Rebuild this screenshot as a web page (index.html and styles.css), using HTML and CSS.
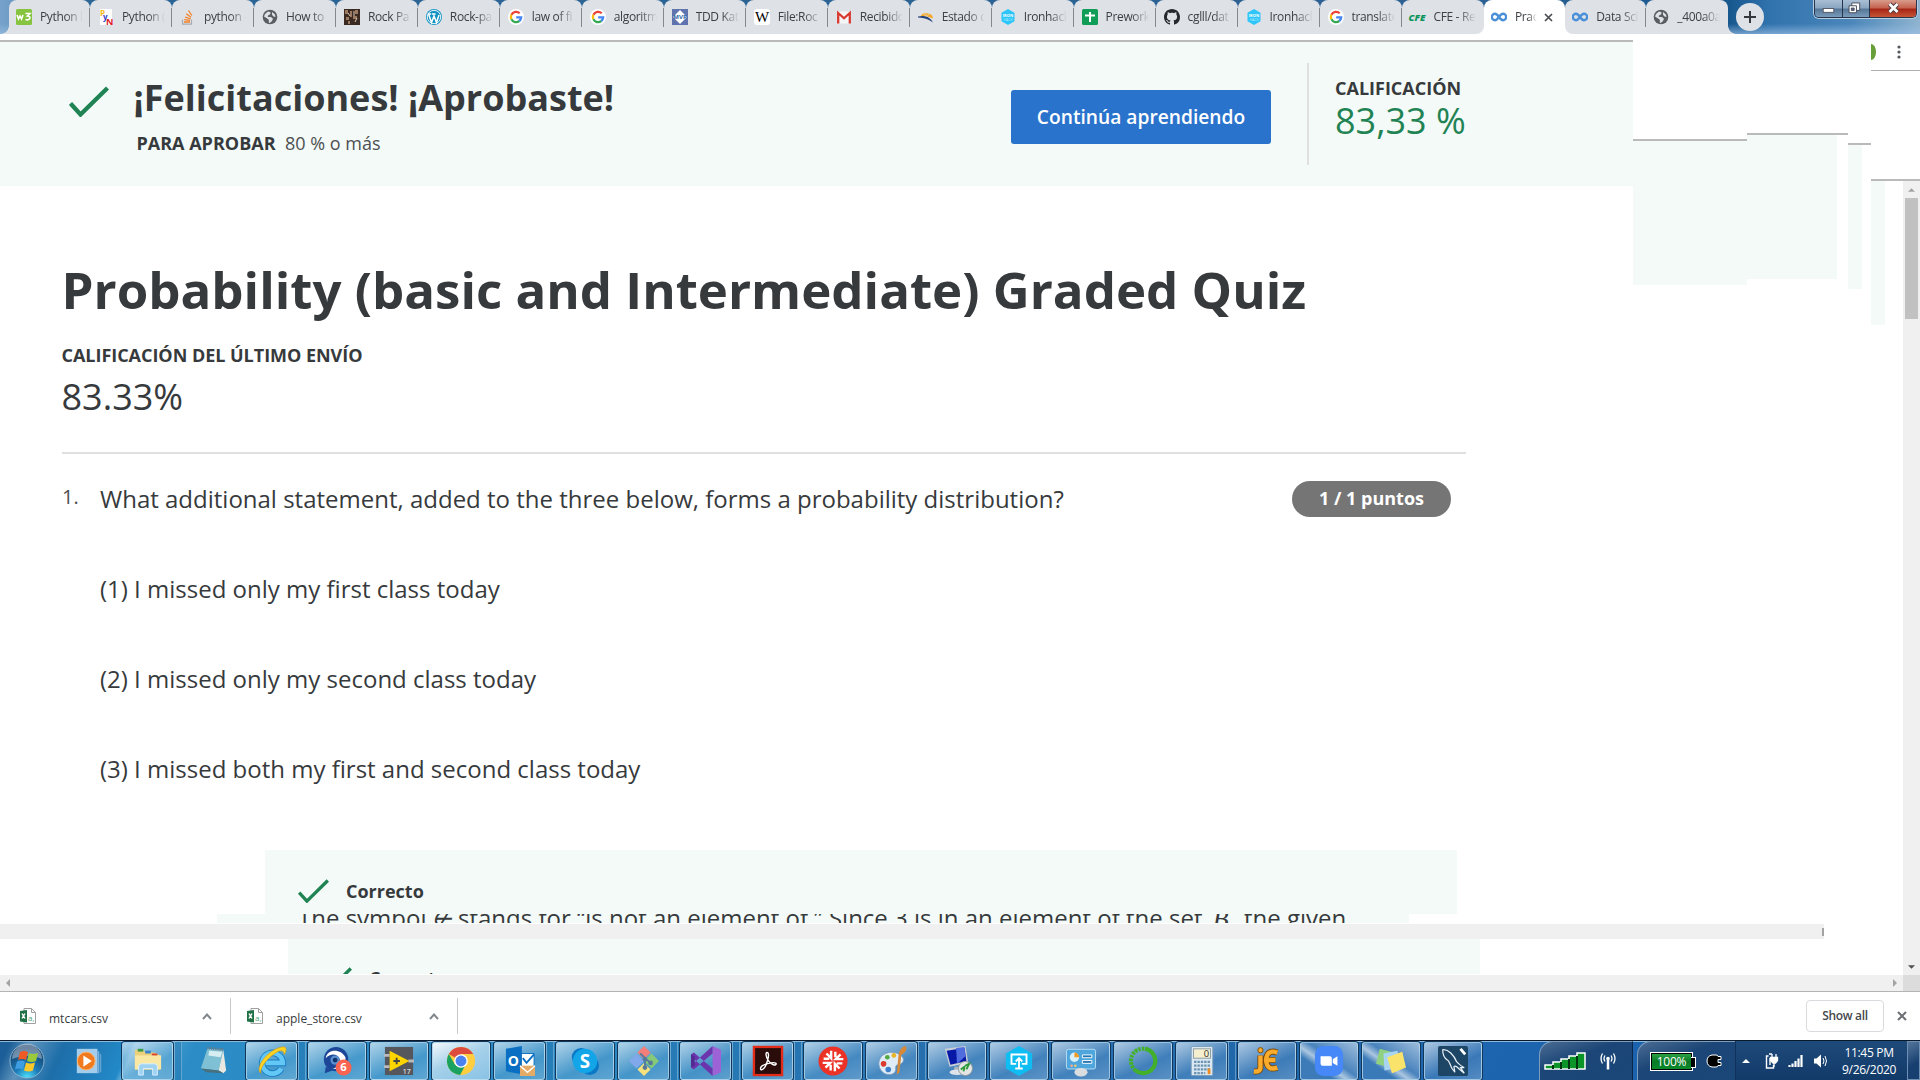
FILE: index.html
```html
<!DOCTYPE html>
<html lang="es">
<head>
<meta charset="utf-8">
<title>Practice</title>
<link rel="stylesheet" href="styles.css">
</head>
<body>
<svg class="defs" aria-hidden="true">
  <symbol id="globe" viewBox="0 0 16 16"><circle cx="8" cy="8" r="7.300" fill="#5a5d61"/><path d="M3 5l3-2.600 2.600.8-.4 2L6 6.400l-.2 1.500H9l2 1.800-1 2.200-2.200 2-1-.5V10.800L4.400 9 2 7.600z M10 3l3 2.500.5 2.500-2-.6-1.500-1.600z" fill="#dee1e6"/></symbol>
  <symbol id="google" viewBox="0 0 16 16"><circle cx="8" cy="8" r="8" fill="#fff"/><g fill="none" stroke-width="2.300"><path d="M11.700 4.300A5.200 5.200 0 0 0 3.400 5.700" stroke="#ea4335"/><path d="M3.400 5.700a5.200 5.200 0 0 0 0 4.600" stroke="#fbbc05"/><path d="M3.400 10.300a5.200 5.200 0 0 0 7.900 1.700" stroke="#34a853"/><path d="M11.300 12a5.200 5.200 0 0 0 1.900-3.700H8.200" stroke="#4285f4"/></g></symbol>
  <symbol id="iron" viewBox="0 0 16 16"><path d="M8 0l6.500 3.800v8.400L8 16l-6.500-3.800V3.800z" fill="#2dc5fa"/><text x="8" y="7.600" font-size="4" font-weight="700" text-anchor="middle" fill="#fff">IRON</text><text x="8" y="12" font-size="3.500" text-anchor="middle" fill="#b9ecfd">HACK</text></symbol>
  <symbol id="coursera" viewBox="0 0 16 16"><path d="M8 8C6.500 5.800 5.500 4.800 4 4.800a3.200 3.200 0 0 0 0 6.400C7 11.200 8.500 4.800 12 4.800a3.200 3.200 0 0 1 0 6.400C10.500 11.200 9.500 10.200 8 8" fill="none" stroke="#4a90d9" stroke-width="2.400"/></symbol>
  <symbol id="check" viewBox="0 0 40 31"><path d="M1.500 17.500L11.500 28.500 38.500 2" fill="none" stroke="#1f8354" stroke-width="4.300"/></symbol>
  <symbol id="excel" viewBox="0 0 16 16"><path d="M4 .5h7.500l4 4v11H4z" fill="#fff" stroke="#a0a0a0"/><path d="M11.500.5v4h4" fill="none" stroke="#a0a0a0"/><path d="M0 3l7-1v12.500l-7-1z" fill="#1f7145"/><path d="M2 5.500l3 5M5 5.500l-3 5" stroke="#fff" stroke-width="1.400"/><text x="8" y="13" font-size="8" fill="#4da77a">a,</text></symbol>
  <symbol id="chev" viewBox="0 0 10 7"><path d="M1 6l4-4.500L9 6" fill="none" stroke="#80868b" stroke-width="2"/></symbol>
</svg>

<div class="screen">
  <header class="tabstrip">
    <div class="tab first"><svg class="fav" viewBox="0 0 16 16"><rect width="16" height="16" rx="1.500" fill="#86c440"/><path d="M1 6l1.500 4L4 7l1.500 3L7 6M9.500 4.500h4.500L11.500 7c4 0 3 5-2 3.500" fill="none" stroke="#fff" stroke-width="1.600"/></svg><span class="cap">Python l</span></div>
    <div class="tab"><svg class="fav" viewBox="0 0 16 16"><rect x="2" width="12" height="16" fill="#fff"/><text x="2" y="7" font-size="8" font-weight="700" fill="#f3b816">P</text><text x="5" y="11" font-size="8" font-weight="700" fill="#3040c8">y</text><text x="8" y="16" font-size="9" font-weight="700" fill="#e01828">N</text></svg><span class="cap">Python (</span></div>
    <div class="tab"><svg class="fav" viewBox="0 0 16 16"><path d="M2.500 10.500v4.700h9v-4.700" fill="none" stroke="#a8abb0" stroke-width="1.200"/><path d="M4 13h6M4.200 10.700l5.800.7M5 8l5.500 1.800M6.300 4.800l4.700 3.500M8.500 1.500l3.300 5" stroke="#f48024" stroke-width="1.300"/></svg><span class="cap">python -</span></div>
    <div class="tab"><svg class="fav"><use href="#globe"/></svg><span class="cap">How to&nbsp;</span></div>
    <div class="tab"><svg class="fav" viewBox="0 0 16 16"><rect width="16" height="16" fill="#3b2a22"/><path d="M1 1h3v4H1zM6 2h2v6H6zM11 1h3v4h-3zM2 8h3v3H2zM9 7h4v3H9zM4 12h2v3H4z" fill="#9c7a62"/><path d="M4 4l2 3M10 2v5M13 9l-2 4" stroke="#d9cbb8"/></svg><span class="cap">Rock Pa</span></div>
    <div class="tab"><svg class="fav" viewBox="0 0 16 16"><circle cx="8" cy="8" r="8" fill="#1492c4"/><circle cx="8" cy="8" r="6.700" fill="none" stroke="#fff" stroke-width=".9"/><path d="M2.500 5l3 8.500L8 7l2.500 6.500L13 6M1.800 5h3.400M6 5h3.600" fill="none" stroke="#fff" stroke-width="1.500"/></svg><span class="cap">Rock-pa</span></div>
    <div class="tab"><svg class="fav"><use href="#google"/></svg><span class="cap">law of fi</span></div>
    <div class="tab"><svg class="fav"><use href="#google"/></svg><span class="cap">algoritm</span></div>
    <div class="tab"><svg class="fav" viewBox="0 0 16 16"><rect width="16" height="16" fill="#5f74ae"/><path d="M8 1l7 7-7 7-7-7z" fill="#fff"/><text x="8" y="10.300" font-size="6" font-weight="700" text-anchor="middle" fill="#2a62a8">MVP</text></svg><span class="cap">TDD Kat</span></div>
    <div class="tab"><svg class="fav" viewBox="0 0 16 16"><rect width="16" height="16" rx="3" fill="#fff"/><text class="serif" x="8" y="13" font-size="15" text-anchor="middle" fill="#000">W</text></svg><span class="cap">File:Roc</span></div>
    <div class="tab"><svg class="fav" viewBox="0 0 16 16"><rect x="1" y="2.500" width="14" height="12" rx="1" fill="#f5f5f5"/><path d="M2.200 14.500V4L8 9.300 13.800 4v10.500" fill="none" stroke="#d93a2f" stroke-width="2.300"/></svg><span class="cap">Recibido</span></div>
    <div class="tab"><svg class="fav" viewBox="0 0 16 16"><path d="M2.500 7.500a6.500 5.500 0 0 1 12.500 2L9 7.300z" fill="#f7a823"/><path d="M8 2v5M4.500 4l4 3.500M12 3L9 7.500" stroke="#dee1e6" stroke-width=".6"/><path d="M0 7.500c6-1.500 12 0 15 6-4-3-8-4.500-15-5z" fill="#26437c"/></svg><span class="cap">Estado d</span></div>
    <div class="tab"><svg class="fav"><use href="#iron"/></svg><span class="cap">Ironhack</span></div>
    <div class="tab"><svg class="fav" viewBox="0 0 16 16"><rect width="16" height="16" rx="1.500" fill="#0f9d58"/><path d="M8 3v10M3 6.500h10" stroke="#fff" stroke-width="2"/></svg><span class="cap">Prework</span></div>
    <div class="tab"><svg class="fav" viewBox="0 0 16 16"><path d="M8 0C3.580 0 0 3.580 0 8c0 3.540 2.290 6.530 5.470 7.590.4.070.55-.17.55-.38 0-.19-.01-.82-.01-1.490-2.010.37-2.530-.49-2.690-.94-.09-.23-.48-.94-.82-1.130-.28-.15-.68-.52-.01-.53.63-.01 1.080.58 1.230.82.72 1.210 1.870.87 2.330.66.07-.52.28-.87.51-1.070-1.780-.2-3.640-.89-3.640-3.950 0-.87.31-1.590.82-2.150-.08-.2-.36-1.020.08-2.120 0 0 .67-.21 2.200.82.64-.18 1.320-.27 2-.27s1.360.09 2 .27c1.530-1.040 2.200-.82 2.200-.82.44 1.100.16 1.920.08 2.120.51.56.82 1.270.82 2.150 0 3.070-1.870 3.750-3.650 3.950.29.25.54.73.54 1.480 0 1.070-.01 1.930-.01 2.200 0 .21.15.46.55.38A8.010 8.010 0 0 0 16 8c0-4.420-3.580-8-8-8z" fill="#24292e"/></svg><span class="cap">cglll/dat</span></div>
    <div class="tab"><svg class="fav"><use href="#iron"/></svg><span class="cap">Ironhack</span></div>
    <div class="tab"><svg class="fav"><use href="#google"/></svg><span class="cap">translate</span></div>
    <div class="tab before"><svg class="fav" viewBox="0 0 16 16"><text x="-.5" y="11.500" font-size="9.500" font-weight="800" font-style="italic" textLength="17" lengthAdjust="spacingAndGlyphs" fill="#08935a">CFE</text></svg><span class="cap">CFE - Re</span></div>
    <div class="tab active"><svg class="fav"><use href="#coursera"/></svg><span class="cap short">Prac</span><svg class="close" viewBox="0 0 9 9"><path d="M1 1l7 7M8 1L1 8" stroke="#4a4d51" stroke-width="1.700"/></svg></div>
    <div class="tab after"><svg class="fav"><use href="#coursera"/></svg><span class="cap">Data Sci</span></div>
    <div class="tab last"><svg class="fav"><use href="#globe"/></svg><span class="cap">_400a0a</span></div>
    <div class="newtab"><svg viewBox="0 0 12 12"><path d="M6 0v12M0 6h12" stroke="#35383c" stroke-width="2"/></svg></div>
    <div class="winctl">
      <span class="wc min"><svg viewBox="0 0 28 18"><rect x="8.500" y="8.500" width="11" height="4" fill="#fff" stroke="#555a68"/></svg></span>
      <span class="wc max"><svg viewBox="0 0 28 18"><path d="M9.500 2.500h8.500v8h-8.500z" fill="#fff" stroke="#444a58"/><path d="M6.500 5.500h8v7.500h-8z" fill="#fff" stroke="#444a58"/><path d="M9 8h3v2.500H9z" fill="#668" stroke="#444a58"/></svg></span>
      <span class="wc cls"><svg viewBox="0 0 46 18"><path d="M19.500 4l8 8M27.500 4l-8 8" stroke="#534048" stroke-width="4.600"/><path d="M19.500 4l8 8M27.500 4l-8 8" stroke="#fff" stroke-width="2.600"/></svg></span>
    </div>
  </header>

  <div class="view">
    <div class="page">
      <div class="upper">
        <main class="main">
          <section class="banner">
            <svg class="tick"><use href="#check"/></svg>
            <div class="congrats">
              <h2>¡Felicitaciones! ¡Aprobaste!</h2>
              <p><b>PARA APROBAR</b><span class="pct">80 % o más</span></p>
            </div>
            <button class="cta">Continúa aprendiendo</button>
            <div class="grade"><b>CALIFICACIÓN</b><span class="big">83,33 %</span></div>
          </section>
          <section class="quiz">
            <h1>Probability (basic and Intermediate) Graded Quiz</h1>
            <p class="lastlabel">CALIFICACIÓN DEL ÚLTIMO ENVÍO</p>
            <p class="lastgrade">83.33%</p>
            <div class="question">
              <span class="num">1.</span>
              <div class="body">
                <p>What additional statement, added to the three below, forms a probability distribution?</p>
                <p>(1) I missed only my first class today</p>
                <p>(2) I missed only my second class today</p>
                <p>(3) I missed both my first and second class today</p>
              </div>
              <span class="pill">1 / 1 puntos</span>
            </div>
          </section>
        </main>
        <div class="strip a"><i></i></div>
        <div class="strip b"><i></i></div>
        <div class="strip c"><i></i></div>
      </div>
      <div class="fb one"><svg class="smalltick"><use href="#check"/></svg><b>Correcto</b></div>
      <div class="fb two"><span>The symbol <em class="notin">∉</em> stands for “is not an element of.” Since 3 is in an element of the set <em class="setb">B</em>, the given</span></div>
      <div class="ghostbar"><i></i></div>
      <div class="fb three"><svg class="smalltick"><use href="#check"/></svg><b>Correcto</b></div>
    </div>
    <aside class="edge">
      <div class="menu"><span class="avatar"></span><svg viewBox="0 0 4 14"><g fill="#55585c"><circle cx="2" cy="2" r="1.600"/><circle cx="2" cy="7" r="1.600"/><circle cx="2" cy="12" r="1.600"/></g></svg></div>
      <div class="edgegap"></div>
      <div class="edgebody"><span class="sliver"></span><div class="vbar"><svg viewBox="0 0 8 4"><path d="M0 4l4-4 4 4z" fill="#a3a3a3"/></svg><span class="thumb"></span><svg class="down" viewBox="0 0 8 4"><path d="M0 0l4 4 4-4z" fill="#505050"/></svg></div></div>
    </aside>
  </div>
  <div class="hbar"><svg viewBox="0 0 4 8"><path d="M4 0L0 4l4 4z" fill="#a3a3a3"/></svg><svg class="rt" viewBox="0 0 4 8"><path d="M0 0l4 4-4 4z" fill="#a3a3a3"/></svg><span class="corner"></span></div>

  <div class="downloads">
    <div class="dl d1"><svg class="xls"><use href="#excel"/></svg><span>mtcars.csv</span><svg class="chev"><use href="#chev"/></svg></div>
    <div class="dl d2"><svg class="xls"><use href="#excel"/></svg><span>apple_store.csv</span><svg class="chev"><use href="#chev"/></svg></div>
    <button class="showall">Show all</button>
    <svg class="dlx" viewBox="0 0 10 10"><path d="M1 1l8 8M9 1L1 9" stroke="#6b6f74" stroke-width="2"/></svg>
  </div>

  <footer class="taskbar">
    <div class="orb"><svg viewBox="0 0 36 36"><defs><radialGradient id="og" cx=".5" cy="1" r=".9"><stop offset="0" stop-color="#4fe6ff"/><stop offset=".4" stop-color="#1d7cb8"/><stop offset="1" stop-color="#123a66"/></radialGradient></defs><circle cx="18" cy="18" r="17" fill="url(#og)" stroke="#87b4d2"/><path d="M3 16a15 15 0 0 1 30 0c-9-4-20-4-30 0z" fill="#fff" opacity=".38"/><path d="M11 9q4-2 8 0l-2 8q-4-2-8 0z" fill="#ee5a24"/><path d="M20 10q4 2 9 0l-2 8q-4 2-9 0z" fill="#9bc93a"/><path d="M8 18.500q4-2 8 0l-2 8q-4-2-8 0z" fill="#3f9ee2"/><path d="M17 19.500q4 2 9 0l-2 8q-4 2-9 0z" fill="#fcc82c"/></svg></div>
    <div class="task bare wmp"><svg viewBox="0 0 32 32"><path d="M3 3h22v26H3z" fill="#a4cdec"/><path d="M25 5l2 1v23h-2zM28 8l1 1v19h-1z" fill="#7db1da"/><circle cx="13" cy="16" r="9.500" fill="#f17a1e" stroke="#ffb36b"/><path d="M10 10l9 6-9 6z" fill="#fff"/></svg></div>
    <div class="task stack"><svg viewBox="0 0 32 32"><path d="M2 4h9l2 3h10l6 3v15H2z" fill="#ecd07a"/><path d="M2 10h28v15H2z" fill="#f9e7a4"/><path d="M5 3h6v3H5z" fill="#3d9b48"/><path d="M13 5h6v3h-6z" fill="#3683c9"/><path d="M20 8h6v2h-6z" fill="#d6452d"/><path d="M6 31v-9q0-3 3-3h14q3 0 3 3v9h-5v-7H11v7z" fill="#9fd2f1" stroke="#daf1ff"/></svg></div>
    <div class="task bare"><svg viewBox="0 0 32 32"><path d="M10 3l17 1-5 22L3 24z" fill="#7fc0d4"/><path d="M12 5l14 1-2 6-13-2z" fill="#d6edf2"/><path d="M27 4l3 22-3 3-5-3z" fill="#e8e8e0"/><path d="M10 2l17 2" stroke="#6e7b83" stroke-width="3" stroke-dasharray="1 1"/><path d="M3 24l19 2 5 3-18-1z" fill="#48707d"/></svg></div>
    <div class="task stack"><svg viewBox="0 0 32 32"><path d="M26 24A11 11 0 1 1 27.500 18H9" fill="none" stroke="#1c7fc4" stroke-width="7"/><path d="M26 24A11 11 0 1 1 27.500 18H9" fill="none" stroke="#63c8f6" stroke-width="5"/><path d="M4 29C-3 22 13 3 27 1c6-1 4 6 2 8 0-4-3-5-7-3C12 12 3 22 4 29z" fill="#fbd324" stroke="#d49c0a" stroke-width=".7"/></svg></div>
    <div class="task"><svg viewBox="0 0 32 32"><circle cx="15" cy="14" r="13" fill="#1c4697"/><path d="M4 13C5 3 20 2 25 12c1 9-7 14-14 12 6-1 9-5 8-10-2-6-10-7-15-1z" fill="#fff"/><circle cx="14" cy="15" r="5" fill="#5b8fd0"/><circle cx="14" cy="15" r="2.600" fill="#12346c"/><path d="M4 22l-1 7 8-3z" fill="#1c4697"/><circle cx="23" cy="23" r="8.500" fill="#fb6451"/><text x="23" y="27" font-size="12" font-weight="700" text-anchor="middle" fill="#fff">6</text></svg></div>
    <div class="task"><svg viewBox="0 0 32 32"><rect x="1" y="1" width="30" height="30" fill="#56575c"/><path d="M0 10h6M0 22h6M26 16h6" stroke="#b8babe" stroke-width="3"/><path d="M6 5l21 11L6 27z" fill="#ffd500"/><path d="M10 16h7M13.500 12.500v7" stroke="#444" stroke-width="2"/><text x="20" y="29.500" font-size="7.500" fill="#fff">17</text></svg></div>
    <div class="task lit"><svg viewBox="0 0 32 32"><circle cx="16" cy="16" r="15" fill="#ffcd40"/><path d="M16 16L3 8.500A15 15 0 0 1 29 8.500H16z" fill="#dd4b3e"/><path d="M3 8.500A15 15 0 0 0 15 31l6.500-12L16 16 9.500 19.800z" fill="#1aa260"/><circle cx="16" cy="16" r="7.300" fill="#fff"/><circle cx="16" cy="16" r="5.800" fill="#4a82ef"/></svg></div>
    <div class="task stack"><svg viewBox="0 0 32 32"><path d="M17 8h14v14H17z" fill="#fff" stroke="#0a6fc2"/><path d="M19 13l4 5 8-9" fill="none" stroke="#0a6fc2" stroke-width="2"/><path d="M1 3l17-3v30L1 27z" fill="#0a6fc2"/><text x="9" y="21" font-size="15" font-weight="700" text-anchor="middle" fill="#fff">O</text><path d="M16 21h16v11H16z" fill="#e3ab65"/><path d="M16 21l8 7 8-7" fill="none" stroke="#fff" stroke-width="1.500"/></svg></div>
    <div class="task"><svg viewBox="0 0 32 32"><circle cx="12" cy="12" r="10" fill="#0b78c6"/><circle cx="21" cy="21" r="10" fill="#0b78c6"/><circle cx="16" cy="16" r="13" fill="#12a5e8"/><text x="16" y="23" font-size="20" font-weight="700" text-anchor="middle" fill="#fff">S</text></svg></div>
    <div class="task stack"><svg viewBox="0 0 32 32"><path d="M16 0l7 7-7 7-7-7z" fill="#f47f7a"/><path d="M8 8l8 8-8 8-8-8z" fill="#82a8ec"/><path d="M24 8l8 8-8 8-8-8z" fill="#85c979"/><path d="M16 18l7 7-7 7-7-7z" fill="#f7e17c"/><path d="M12 8l5 5v11M17 13l6 5" fill="none" stroke="#577a9a" stroke-width="2"/><circle cx="17" cy="14" r="2.500" fill="#577a9a"/><circle cx="17" cy="23" r="2.500" fill="#577a9a"/><circle cx="23" cy="18" r="2.500" fill="#577a9a"/></svg></div>
    <div class="task stack"><svg viewBox="0 0 32 32"><path d="M23 0l9 4v24l-9 4z" fill="#9d63d6"/><path d="M0 9l3-2 20 17v8L0 11z M0 23l3 2L23 8V0L0 21z" fill="#6d35ad"/><path d="M0 9l4 2v10l-4 2z" fill="#522a92"/></svg></div>
    <div class="task stack"><svg viewBox="0 0 32 32"><rect x="1" y="1" width="30" height="30" fill="#2a0c0b" stroke="#e22c19" stroke-width="2.500"/><path d="M15 7c-2 0-1 5 1 8s6 6 8 5 0-3-5-2-11 3-11 6 4 1 6-4 4-13 1-13z" fill="none" stroke="#fff" stroke-width="1.500"/></svg></div>
    <div class="task"><svg viewBox="0 0 32 32"><circle cx="16" cy="16" r="15.500" fill="#ec3127"/><g fill="none" stroke="#fff" stroke-width="2.600"><path d="M14 5v8L9 8M6 13.500h6"/><path d="M27 14h-8l5-5M18.500 6v6"/><path d="M18 27v-8l5 5M26 18.500h-6"/><path d="M5 18h8l-5 5M13.500 26v-6"/></g></svg></div>
    <div class="task stack"><svg viewBox="0 0 32 32"><path d="M2 20C1 9 14 3 24 9c8 5 3 11-2 11-4 1 0 6-4 9-6 4-15 0-16-9z" fill="#dfebf5" stroke="#799cbe"/><circle cx="7" cy="19" r="3" fill="#d93b2d"/><circle cx="11" cy="12" r="2.500" fill="#54a744"/><circle cx="18" cy="10" r="2.500" fill="#e8b529"/><circle cx="12" cy="25" r="3" fill="#3c80cb"/><path d="M28 6l3-6-5 5z" fill="#c89f64"/><path d="M30 0c4 2-1 9-4 9l-2 19-3 3 2-22c0-3 4-9 7-9z" fill="#d6893a"/></svg></div>
    <div class="task"><svg viewBox="0 0 32 32"><path d="M3 3l22-3 3 18-20 4z" fill="#c8ced6"/><path d="M5 5l19-3 2 14-17 4z" fill="#0718a6"/><path d="M15 2l9-1 1 10-9 8z" fill="#506de0"/><path d="M13 22h8v5h-8z" fill="#aab4be"/><ellipse cx="16" cy="28" rx="8" ry="3" fill="#dde3e8"/><circle cx="25" cy="24" r="7.500" fill="#e3e6e4" stroke="#8b9498"/><path d="M20 25l4-3-1 5M25 21l4-2-3 6" fill="none" stroke="#2d9b3c" stroke-width="2"/></svg></div>
    <div class="task"><svg viewBox="0 0 32 32"><path d="M16 0l14 8v16l-14 8-14-8V8z" fill="#10bdf2"/><path d="M13 19H8V9h16v10h-5M16 24V13M12.500 16.500L16 13l3.500 3.500M12 24h8" fill="none" stroke="#fff" stroke-width="2"/></svg></div>
    <div class="task"><svg viewBox="0 0 32 32"><rect x=".5" y="3.500" width="31" height="21" rx="2" fill="#4fa6dc" stroke="#b9dff4"/><circle cx="9" cy="12" r="5" fill="#daf0fb"/><path d="M9 12V7a5 5 0 0 1 5 5z" fill="#f49a1e"/><path d="M17.500 9.500h10v3h-10zM17.500 15.500h10v3h-10z" fill="#2376b2" stroke="#fff"/><circle cx="6" cy="21" r="1.300" fill="#fa8"/><circle cx="10" cy="21" r="1.300" fill="#fc6"/><ellipse cx="16" cy="28" rx="7" ry="4.500" fill="#d9dde0"/></svg></div>
    <div class="task"><svg viewBox="0 0 32 32"><path d="M18 3A13 13 0 1 1 8 26" fill="none" stroke="#43b02a" stroke-width="4.500"/><path d="M8 26A13 13 0 0 1 18 3" fill="none" stroke="#43b02a" stroke-width="4.500" stroke-dasharray="2.500 1.300"/><path d="M6 23A14 14 0 0 1 13 2" fill="none" stroke="#43b02a" stroke-width="1.500" stroke-dasharray="1 2"/></svg></div>
    <div class="task stack"><svg viewBox="0 0 32 32"><rect x="4.500" y=".5" width="23" height="31" rx="1.500" fill="#d9e8f3" stroke="#7d9db7"/><rect x="7" y="3" width="18" height="10" fill="#f4efcf" stroke="#8a98a3"/><text x="23.500" y="12" font-size="10" text-anchor="end" fill="#333">0</text><path d="M7.500 17h17M7.500 21h17M7.500 25h17M7.500 29h12" stroke="#6e93b0" stroke-width="2.400" stroke-dasharray="2.600 1"/><path d="M22 24h3v6h-3z" fill="#f08c1e"/></svg></div>
    <div class="task"><svg viewBox="0 0 32 32"><path d="M9 10v13q0 5-7 4M27 7q-11-4-12 8 1 12 12 8M14 15h11" fill="none" stroke="#7a4708" stroke-width="6.500"/><path d="M9 10v13q0 5-7 4M27 7q-11-4-12 8 1 12 12 8M14 15h11" fill="none" stroke="#f9ab2b" stroke-width="4.700"/><circle cx="9" cy="4.500" r="2.800" fill="#f9ab2b" stroke="#7a4708"/></svg></div>
    <div class="task lit2"><svg viewBox="0 0 32 32"><rect x="1" y="0" width="30" height="32" rx="9" fill="#4688f8"/><path d="M7 11h10q2 0 2 2v8H9q-2 0-2-2zM20 14l5-3v10l-5-3z" fill="#fff"/></svg></div>
    <div class="task lit2"><svg viewBox="0 0 32 32"><path d="M4 3l15 4-4 16-15-4z" fill="#8fd081"/><path d="M8 8l15-3 2 18-16 3z" fill="#a8d6f2"/><path d="M12 12l16-6 4 17-15 6z" fill="#fae36a"/></svg></div>
    <div class="task"><svg viewBox="0 0 32 32"><rect width="32" height="32" rx="2" fill="#1d4666"/><path d="M5 4c6-1 12 6 15 13 2 2 5 5 8 6h-4l4 6-6-5c-2-2-4-3-5-2l1 6-3-4c-2-4-3-8-5-9-3-2-5-7-5-11z" fill="none" stroke="#e9f1f6" stroke-width="1.300"/><path d="M24 3l5 6" stroke="#fff" stroke-width="3"/></svg></div>
    <div class="spacer"></div>
    <div class="tray p1"><svg class="sig" viewBox="0 0 42 18"><path d="M1 17v-4h8v-3h8V7h8V4h8V1h8v16z" fill="#0b9427" stroke="#fff" stroke-width="1.500"/><path d="M9 17v-4M17 17v-7M25 17V7M33 17V4" stroke="#031" stroke-width="2"/></svg><svg class="ant" viewBox="0 0 16 16"><path d="M8 6v10" stroke="#fff" stroke-width="2.500"/><circle cx="8" cy="5" r="1.800" fill="#fff"/><path d="M5 2q-2 3 0 6M11 2q2 3 0 6M2.500 0q-3 5 0 10M13.500 0q3 5 0 10" fill="none" stroke="#fff" stroke-width="1.300"/></svg></div>
    <div class="tray p2"><span class="batt">100%</span><svg class="plug" viewBox="0 0 16 14"><path d="M6 1h4q2 0 2 1.500H15v3h-3v3h3v3h-3Q12 13 10 13H6Q1 12 1 7t5-6z" fill="#000" stroke="#fff"/></svg></div>
    <div class="tray p3">
      <svg class="up" viewBox="0 0 8 4"><path d="M0 4l4-4 4 4z" fill="#fff"/></svg>
      <svg class="pw" viewBox="0 0 14 16"><path d="M3.500 3h-2v12h7v-3M4 1h3M5 12V5" fill="none" stroke="#fff" stroke-width="1.400"/><path d="M7 1v3M11 1v3M5.500 4.500h7v3l-2 2.500H8l-2.500-2.500zM9 10v4" fill="#fff" stroke="#fff" stroke-width="1.300"/></svg>
      <svg class="sg" viewBox="0 0 16 12"><path d="M1.500 12v-2M4.500 12V8.500M7.500 12V6M10.500 12V3.500M13.500 12V0" stroke="#fff" stroke-width="2.200"/></svg>
      <svg class="sp" viewBox="0 0 13 14"><path d="M0 4.500h2.500L7 .5v13l-4.500-4H0z" fill="#fff"/><path d="M9 4q2 3 0 6M11 2q3 5 0 10" fill="none" stroke="#fff"/></svg>
      <div class="clock"><span>11:45 PM</span><span>9/26/2020</span></div>
      <span class="peek"></span>
    </div>
  </footer>
</div>
</body>
</html>
```
FILE: styles.css
```css
* { box-sizing: border-box; }
body { margin: 0; font-family: "Open Sans", "Noto Sans", sans-serif; color: #373a3c; background: #fff; }
h1, h2, p { margin: 0; }
svg { display: block; flex: none; }
button { font: inherit; border: 0; padding: 0; }
.defs { position: absolute; width: 0; height: 0; }
.screen { width: 1920px; height: 1080px; display: flex; flex-direction: column; overflow: hidden; }

/* browser tabs */
.tabstrip { position: relative; z-index: 0; height: 34px; flex: none; display: flex; padding-left: 8.500px; background: linear-gradient(#0a2c5000 70%, #9bbfe4aa), linear-gradient(90deg, #77a3cb 0, #2a6596 90px, #2b6092 1500px, #17588f 1730px, #3173ad 1770px, #4a86ba 1850px, #8fb4d0 1920px); }
.tab { position: relative; width: 81.970px; height: 34px; flex: none; display: flex; align-items: center; padding-left: 7.500px; background: #dee1e6; border-radius: 8px 8px 0 0; }
.tab::after { content: ""; position: absolute; right: 0; top: 8px; width: 1px; height: 19px; background: #85898e; }
.tab.before::after, .tab.active::after, .tab.last::after { display: none; }
.tab.active { background: #fff; width: 80.800px; padding-left: 7px; }
.tab.before { border-bottom-right-radius: 8px; }
.tab.after { border-bottom-left-radius: 8px; width: 81px; }
.tab.before::before, .tab.after::before, .tab.first::before, .tab.last::before { content: ""; position: absolute; z-index: -1; bottom: 0; width: 8px; height: 8px; }
.tab.before::before { right: 0; background: #fff; }
.tab.after::before { left: 0; background: #fff; }
.tab.first::before { left: -8px; background: radial-gradient(circle at 0 0, transparent 7.500px, #dee1e6 8px); }
.tab.last::before { right: -8px; background: radial-gradient(circle at 100% 0, transparent 7.500px, #dee1e6 8px); }
.fav { width: 16px; height: 16px; overflow: visible; }
.serif { font-family: "Liberation Serif", serif; }
.cap { width: 43px; margin-left: 8px; overflow: hidden; white-space: nowrap; font-size: 12px; line-height: 20px; letter-spacing: -.35px; color: #3c3f43; -webkit-mask-image: linear-gradient(90deg, #000 60%, transparent); mask-image: linear-gradient(90deg, #000 60%, transparent); }
.cap.short { width: 22px; }
.close { width: 9px; height: 9px; margin-left: 7px; }
.newtab { width: 28px; height: 28px; margin: 3px 0 0 8px; border-radius: 50%; background: #dee1e6; display: flex; align-items: center; justify-content: center; }
.newtab svg { width: 12px; height: 12px; }
.winctl { display: flex; margin: 0 3px 0 auto; height: 18px; border: 1px solid #26344c; border-top: 0; border-radius: 0 0 5px 5px; overflow: hidden; box-shadow: 0 0 0 1px #b8cde0; }
.wc { height: 18px; background: linear-gradient(#a9bfd5, #8aa5c0 45%, #557696 50%, #7fa0bf); border-right: 1px solid #26344c; }
.wc svg { width: 100%; height: 18px; }
.min { width: 28px; }
.max { width: 27px; }
.cls { width: 46px; border: 0; background: linear-gradient(#d89c8c, #c6614e 45%, #a52414 50%, #cb5b3a); }

/* browser viewport */
.view { flex: none; height: 941px; display: flex; }
.page { width: 1871px; display: flex; flex-direction: column; }
.upper { height: 816px; display: flex; }
.main { width: 1633px; padding-top: 6px; }
.banner { height: 146px; border-top: 2px solid #bababa; background: #f4faf8; display: flex; padding-left: 69px; }
.tick { width: 40px; height: 31px; margin-top: 44px; }
.congrats { width: 876px; margin-left: 25px; padding-top: 31px; }
.congrats h2 { margin-left: -.5px; font-size: 36px; line-height: 50px; font-weight: 700; white-space: nowrap; }
.congrats p { font-size: 18px; line-height: 24px; margin-top: 8px; padding-left: 2.500px; display: flex; gap: 9.500px; }
.congrats b { font-weight: 700; }
.pct { color: #4d5052; }
.cta { width: 260px; height: 54px; margin-left: 1px; margin-top: 48px; padding-bottom: 2px; border-radius: 3px; background: #2a73cc; color: #fff; font-size: 19.200px; font-weight: 600; }
.grade { height: 102px; margin: 21px 0 0 36px; border-left: 2px solid #e0e0e0; padding: 13px 0 0 26px; display: flex; flex-direction: column; align-items: flex-start; font-size: 18px; line-height: 24px; }
.grade b { font-weight: 700; }
.grade .big { margin-top: 1px; font-size: 36px; line-height: 40px; color: #1f8354; }
.quiz { padding-left: 62px; }
h1 { font-size: 51px; line-height: 68px; font-weight: 700; padding-top: 69px; height: 139px; margin-left: -.5px; white-space: nowrap; }
.lastlabel { font-size: 18px; line-height: 24px; font-weight: 700; letter-spacing: -.03px; margin: 18px 0 0 -.5px; }
.lastgrade { font-size: 36px; line-height: 48px; margin: 6px 0 0 -.5px; }
.question { width: 1404px; margin-top: 31px; border-top: 2px solid #e0e0e0; display: flex; }
.num { width: 38px; font-size: 20px; line-height: 28px; padding-top: 29px; flex: none; color: #4d5052; }
.body { width: 1192px; padding-top: 28px; font-size: 24px; line-height: 34px; white-space: nowrap; flex: none; }
.body p { margin-bottom: 56px; }
.pill { width: 159px; height: 36px; margin-top: 27px; border-radius: 18px; background: #757575; color: #fff; font-size: 18px; line-height: 35px; font-weight: 700; text-align: center; }
.strip { border-top: 2px solid #bababa; }
.strip i { display: block; height: 144px; background: #f4faf8; }
.a { width: 114px; margin-top: 105px; }
.b { width: 101px; margin-top: 99px; }
.b i { width: 90px; }
.c { width: 23px; margin-top: 109px; }
.c i { width: 14px; }
.fb { background: #f4faf8; display: flex; overflow: hidden; white-space: nowrap; }
.fb b { font-size: 18px; line-height: 24px; font-weight: 700; }
.smalltick { width: 33px; height: 24px; }
.one { height: 64px; margin-left: 265px; width: 1192px; padding: 29px 0 0 32px; }
.one b { margin: 0 0 0 16px; }
.two { height: 9px; margin: 0 0 1px 217px; width: 1192px; padding-left: 84px; font-size: 24px; line-height: 34px; }
.two span { margin: -13px 0 0 -3px; }
.two em { font-family: "Liberation Serif", serif; }
.notin { margin: 0 0 0 -2px; }
.setb { margin: 0 3px 0 4px; font-size: 26px; }
.ghostbar { width: 1824px; height: 15px; background: #f0f0f0; display: flex; justify-content: flex-end; align-items: center; }
.ghostbar i { width: 2px; height: 8px; background: #a3a3a3; }
.three { height: 35px; margin-left: 288px; width: 1192px; padding: 28px 0 0 32px; }
.three b { margin: -1px 0 0 16px; }
.edge { width: 49px; }
.menu { height: 37px; border-bottom: 1px solid #b0b0b0; display: flex; padding-top: 10px; }
.avatar { width: 5px; height: 16px; border-radius: 0 5px 5px 0 / 0 8px 8px 0; background: #689f38; }
.menu svg { width: 4px; height: 14px; margin: 1px 0 0 20.500px; }
.edgegap { height: 108px; }
.edgebody { height: 796px; border-top: 2px solid #bababa; display: flex; justify-content: space-between; }
.sliver { width: 14px; height: 144px; background: #f4faf8; }
.vbar { width: 17px; background: #f0f0f0; padding-top: 7px; display: flex; flex-direction: column; align-items: center; }
.vbar svg { width: 7px; height: 4px; }
.thumb { width: 13px; height: 121px; background: #c1c1c1; margin-top: 6px; }
.vbar .down { margin: auto 0 6px; }
.hbar { height: 17px; flex: none; background: #f0f0f0; border-bottom: 1px solid #b4b4b4; display: flex; align-items: center; padding-left: 6px; }
.hbar svg { width: 4px; height: 8px; }
.hbar .rt { margin-left: auto; }
.corner { width: 17px; height: 16px; margin-left: 6px; background: #dcdcdc; }

/* downloads shelf */
.downloads { height: 48px; flex: none; display: flex; align-items: center; font-size: 12px; }
.dl { height: 36px; border-right: 1px solid #c8c8c8; display: flex; align-items: center; padding: 0 18px 0 20px; }
.d1 { width: 231px; }
.d2 { width: 227px; padding-left: 16px; }
.dl span { margin-left: 13px; padding-top: 4px; }
.xls { width: 16px; height: 16px; overflow: visible; }
.chev { width: 10px; height: 7px; margin-left: auto; }
.showall { width: 78px; height: 32px; margin-left: auto; padding-bottom: 2px; border: 1px solid #d8dade; border-radius: 4px; background: #fff; color: #45484c; font-weight: 600; letter-spacing: -.3px; }
.dlx { width: 10px; height: 10px; margin: 0 13px; }

/* taskbar */
.taskbar { height: 40px; flex: none; display: flex; padding-left: 9px; border-top: 1px solid #0a1a2c; box-shadow: inset 0 1px #8db9da; background: linear-gradient(115deg, #1c5e97 0, #1c5e97 10px, #5d93bc 28px, #1d6ea9 60px, #2389c8 120px, #5aa8d6 125px, #2b8cc6 180px, #2a88c3 560px, #2a74b5 860px, #2068ae 1200px, #1a62ae 1500px, #134a86 1570px, #133e6e 1700px, #143f6f 1920px); }
.orb { width: 36px; }
.orb svg { width: 36px; height: 36px; margin-top: 1.500px; }
.task { position: relative; width: 58px; height: 38px; margin: 1px 2px 0; flex: none; display: flex; justify-content: center; align-items: center; border: 1px solid #b9dcf0b0; border-radius: 3px; box-shadow: 0 0 0 1px #12375a; background: linear-gradient(155deg, #ffffffa0, #ffffff48 40%, #ffffff20 60%, #ffffff40); }
.task svg { width: 30px; height: 30px; overflow: visible; }
.task.bare { border-color: transparent; background: none; box-shadow: none; }
.wmp { margin-left: 15px; }
.stack { width: 51px; margin-right: 9px; }
.stack::after { content: ""; position: absolute; left: 51px; top: -1px; width: 6px; height: 38px; border: solid #9cc8e4a0; border-width: 0 1px; border-right-color: #9cc8e480; background: #1c5f9640; }
.lit { background: linear-gradient(155deg, #fffffff0, #cfe8f6c0 45%, #a9d5eec0); }
.lit2 { background: linear-gradient(35deg, #ffffff20 30%, #ffffffa0 42%, #ffffff30 55%, #ffffff90); }
.spacer { flex: 1; }
.tray { height: 39px; display: flex; align-items: center; flex: none; }
.p1, .p2 { border-radius: 14px 0 0 0; border-left: 1px solid #7e9dbc; border-top: 1px solid #7e9dbc; background: linear-gradient(160deg, #4a6c93, #1c4677 40%, #194778); }
.p1 { width: 94px; margin-right: 4px; padding-left: 4px; border-right: 1px solid #0c2747; }
.sig { width: 42px; height: 18px; }
.ant { width: 16px; height: 17px; margin-left: 14px; }
.p2 { width: 98px; padding-left: 12px; }
.batt { position: relative; width: 43px; height: 19px; border: 1px solid #fff; outline: 1px solid #000; outline-offset: -2px; background: linear-gradient(#2fa648, #0a7a26 50%, #0c8d2d); color: #fff; font-size: 12px; line-height: 17px; text-align: center; letter-spacing: -.2px; }
.batt::after { content: ""; position: absolute; right: -4px; top: 4px; width: 4px; height: 9px; background: #000; border: 1px solid #fff; border-left: 0; }
.plug { width: 16px; height: 14px; margin-left: 13px; }
.p3 { width: 185px; border-left: 1px solid #0f315b; background: linear-gradient(#1e4a7a, #123a69); padding-left: 6px; }
.up { width: 8px; height: 4px; }
.pw { width: 14px; height: 16px; margin-left: 15px; }
.sg { width: 16px; height: 12px; margin-left: 9px; }
.sp { width: 13px; height: 14px; margin-left: 10px; }
.clock { width: 79px; display: flex; flex-direction: column; align-items: center; margin-left: 4.500px; color: #fff; font-size: 12px; line-height: 17px; letter-spacing: -.3px; }
.peek { width: 14px; height: 39px; border: 1px solid #6d8fb4; background: linear-gradient(150deg, #55769b, #173f70 60%); margin-left: auto; }
```
